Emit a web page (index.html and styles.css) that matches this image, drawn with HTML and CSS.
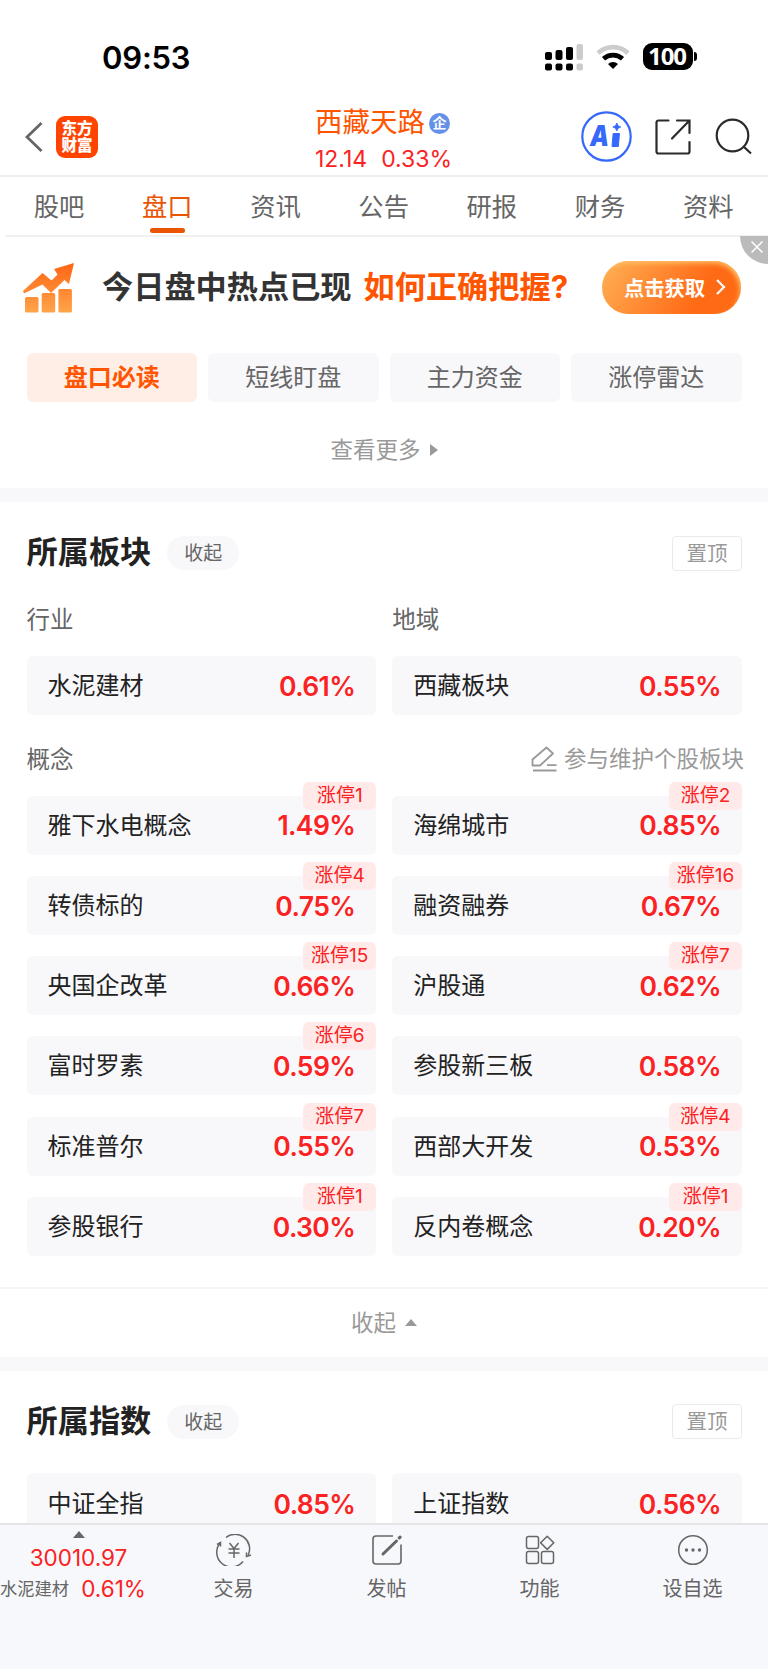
FILE: index.html
```html
<!DOCTYPE html>
<html lang="zh-CN">
<head>
  <meta charset="UTF-8" />
  <meta name="viewport" content="width=device-width, initial-scale=1.0" />
  <title>西藏天路 - 盘口</title>
  <link rel="stylesheet" href="styles.css">
</head>
<body>
  <div class="status-bar">
    <span class="time">09:53</span>
    <div class="status-icons">
      <svg class="signal" width="39" height="28" viewBox="0 0 39 28">
        <rect x="0" y="9" width="7" height="8" rx="2" />
        <rect x="10.5" y="7" width="7" height="10" rx="2" />
        <rect x="21" y="4" width="7" height="13" rx="2" />
        <rect x="31.5" y="1" width="6.5" height="16" rx="2" fill="#ccc" />
        <rect x="0" y="20.5" width="7" height="7" rx="2" />
        <rect x="10.5" y="20.5" width="7" height="7" rx="2" />
        <rect x="21" y="20.5" width="7" height="7" rx="2" />
        <rect x="31.5" y="20.5" width="6.5" height="7" rx="2" fill="#ccc" />
      </svg>
      <svg class="wifi" width="34" height="26" viewBox="0 0 34 26">
        <path d="M2 9a22 22 0 0 1 30 0" fill="none" stroke="#ccc" stroke-width="4.6" />
        <path d="M7.5 14.8a14 14 0 0 1 19 0" fill="none" stroke="#000" stroke-width="4.6" />
        <path d="M17 25l-5-5a7.4 7.4 0 0 1 10 0z" />
      </svg>
      <div class="battery">100</div>
      <span class="battery-cap"></span>
    </div>
  </div>

  <header class="header">
    <div class="header-left">
      <svg width="18" height="30" viewBox="0 0 18 30" fill="none" stroke="#666" stroke-width="2.8">
        <path d="M16.5 1L2 15l14.5 14" />
      </svg>
      <div class="app-logo">东方<br>财富</div>
    </div>
    <div class="stock">
      <div class="stock-name">西藏天路<span class="tag">企</span></div>
      <div class="stock-price"><span>12.14</span><span>0.33%</span></div>
    </div>
    <div class="header-right">
      <svg width="51" height="51" viewBox="0 0 51 51">
        <circle cx="25.5" cy="25.5" r="24.2" fill="#fff" stroke="#3668fc" stroke-width="2.2" />
        <text class="ai-text" x="9" y="35" textLength="19" lengthAdjust="spacingAndGlyphs">A</text>
        <path d="M32.2 22.5h6.3l-1.2 13h-6.3z" fill="#3668fc" stroke="#3668fc" stroke-linejoin="round" />
        <path d="M35.8 12l1.3 2.7 2.7 1.3-2.7 1.3-1.3 2.7-1.3-2.7-2.7-1.3 2.7-1.3z" fill="#3668fc" stroke="#3668fc" stroke-width=".8" />
      </svg>
      <svg class="share" width="36" height="36" viewBox="0 0 36 36" fill="none" stroke="#2b2b2b" stroke-width="2.2" stroke-linecap="round">
        <path d="M13.5 1.5h-10a2 2 0 0 0-2 2v29a2 2 0 0 0 2 2h29a2 2 0 0 0 2-2V23" />
        <path d="M22 1.5h12.5V14M34 2L17 19.5" />
      </svg>
      <svg class="search" width="37" height="37" viewBox="0 0 37 37" fill="none" stroke="#2b2b2b" stroke-width="2.2">
        <circle cx="17.5" cy="17.5" r="15.8" />
        <path d="M28.5 28.5l7.5 7" />
      </svg>
    </div>
  </header>

  <nav class="tabs">
    <a>股吧</a>
    <a class="active">盘口</a>
    <a>资讯</a>
    <a>公告</a>
    <a>研报</a>
    <a>财务</a>
    <a>资料</a>
  </nav>

  <div class="banner">
    <svg class="banner-icon" width="52" height="50" viewBox="0 0 52 50">
      <defs>
        <linearGradient id="up" x1="0" y1="0" x2="0" y2="50" gradientUnits="userSpaceOnUse">
          <stop offset="0" stop-color="#ff6414" />
          <stop offset="1" stop-color="#ffa54a" />
        </linearGradient>
      </defs>
      <g fill="url(#up)">
        <path d="M0 28L19.5 10l9 7.5 6-6L31 6 51 0l-5 21-4.500-4L28 30l-8.500-8.500L1 30.500z" />
        <rect x="2" y="34" width="13.5" height="15.5" rx="1.5" />
        <rect x="18.7" y="30" width="13.5" height="19.5" rx="1.5" />
        <rect x="35.4" y="26" width="13.5" height="23.5" rx="1.5" />
      </g>
    </svg>
    <span class="banner-text">今日盘中热点已现</span>
    <span class="banner-text hot">如何正确把握?</span>
    <button class="banner-btn">
      点击获取
      <svg width="10" height="16" viewBox="0 0 10 16" fill="none" stroke="#fff" stroke-width="2.2">
        <path d="M1 1l7 7-7 7" />
      </svg>
    </button>
    <div class="banner-close">
      <svg width="12" height="12" viewBox="0 0 12 12" stroke="#fff" stroke-width="1.5">
        <path d="M.5.5l11 11M11.5.5l-11 11" />
      </svg>
    </div>
  </div>

  <div class="chips">
    <div class="chip active">盘口必读</div>
    <div class="chip">短线盯盘</div>
    <div class="chip">主力资金</div>
    <div class="chip">涨停雷达</div>
  </div>
  <div class="more">查看更多<i class="arrow-right"></i></div>

  <section class="section">
    <div class="section-head">
      <h2>所属板块</h2>
      <span class="pill">收起</span>
      <span class="pin">置顶</span>
    </div>
    <div class="grid labels">
      <span>行业</span>
      <span>地域</span>
    </div>
    <div class="grid">
      <div class="card"><span>水泥建材</span><b>0.61%</b></div>
      <div class="card"><span>西藏板块</span><b>0.55%</b></div>
    </div>
    <div class="concept-head">
      <span>概念</span>
      <span class="edit">
        <svg width="26" height="26" viewBox="0 0 26 26" fill="none" stroke="#999" stroke-width="1.8">
          <path d="M1.5 19.5v-6L15.5 1.5l6.5 6-13 12z" stroke-linejoin="round" />
          <path d="M16 19.2h9.5M2 24.5h23.5" />
        </svg>
        参与维护个股板块
      </span>
    </div>
    <div class="grid concepts">
      <div class="card"><span>雅下水电概念</span><b>1.49%</b><em>涨停1</em></div>
      <div class="card"><span>海绵城市</span><b>0.85%</b><em>涨停2</em></div>
      <div class="card"><span>转债标的</span><b>0.75%</b><em>涨停4</em></div>
      <div class="card"><span>融资融券</span><b>0.67%</b><em>涨停16</em></div>
      <div class="card"><span>央国企改革</span><b>0.66%</b><em>涨停15</em></div>
      <div class="card"><span>沪股通</span><b>0.62%</b><em>涨停7</em></div>
      <div class="card"><span>富时罗素</span><b>0.59%</b><em>涨停6</em></div>
      <div class="card"><span>参股新三板</span><b>0.58%</b></div>
      <div class="card"><span>标准普尔</span><b>0.55%</b><em>涨停7</em></div>
      <div class="card"><span>西部大开发</span><b>0.53%</b><em>涨停4</em></div>
      <div class="card"><span>参股银行</span><b>0.30%</b><em>涨停1</em></div>
      <div class="card"><span>反内卷概念</span><b>0.20%</b><em>涨停1</em></div>
    </div>
  </section>
  <div class="collapse">收起<i class="arrow-up"></i></div>

  <section class="section index-section">
    <div class="section-head">
      <h2>所属指数</h2>
      <span class="pill">收起</span>
      <span class="pin">置顶</span>
    </div>
    <div class="grid">
      <div class="card"><span>中证全指</span><b>0.85%</b></div>
      <div class="card"><span>上证指数</span><b>0.56%</b></div>
    </div>
  </section>

  <footer class="bottom-bar">
    <div class="quote">
      <i class="arrow-up"></i>
      <div class="quote-value">30010.97</div>
      <div class="quote-row"><span>水泥建材</span><b>0.61%</b></div>
    </div>
    <div class="action">
      <svg width="36" height="32" viewBox="0 0 36 32" fill="none" stroke="#666" stroke-width="1.5">
        <path d="M10 3.500A14.500 14.500 0 0 1 32.200 21M27 27.500A14.500 14.500 0 0 1 4 9" />
        <path d="M1 10.500L4.500 8.500v4M35 21l-4.500 1.500v-4" />
        <path d="M13.500 9l4.500 5.500L22.500 9M12.500 15h11M12.500 19h11M18 14.500V24" />
      </svg>
      <span>交易</span>
    </div>
    <div class="action">
      <svg width="32" height="32" viewBox="0 0 32 32" fill="none" stroke="#666" stroke-width="1.6">
        <path d="M22 2H5a3 3 0 0 0-3 3v22a3 3 0 0 0 3 3h22a3 3 0 0 0 3-3V10.500" />
        <path d="M12 20L25.500 7" stroke-width="3" stroke-linecap="round" />
        <path d="M28.300 3.900l.8-.8" stroke-width="3.200" stroke-linecap="round" />
      </svg>
      <span>发帖</span>
    </div>
    <div class="action">
      <svg width="32" height="32" viewBox="0 0 32 32" fill="none" stroke="#666" stroke-width="1.5">
        <rect x="2.5" y="2.5" width="12" height="12" rx="2" />
        <rect x="2.5" y="17.5" width="12" height="12" rx="2" />
        <rect x="17.5" y="17.5" width="12" height="12" rx="2" />
        <path d="M23.2 2.2l6.600 6.600-6.600 6.600-6.600-6.600z" stroke-linejoin="round" />
      </svg>
      <span>功能</span>
    </div>
    <div class="action">
      <svg width="32" height="32" viewBox="0 0 32 32">
        <circle cx="16" cy="16" r="14.3" fill="none" stroke="#666" stroke-width="1.5" />
        <circle cx="9.5" cy="16" r="1.7" fill="#666" />
        <circle cx="16" cy="16" r="1.7" fill="#666" />
        <circle cx="22.5" cy="16" r="1.7" fill="#666" />
      </svg>
      <span>设自选</span>
    </div>
  </footer>
</body>
</html>
```

FILE: styles.css
```css
:root {
  --red: #fa2222;
  --orange: #ff5400;
  --gray-bg: #f8f8fb;
  --text: #222;
  --text-2: #666;
  --text-3: #999;
}

* {
  box-sizing: border-box;
}

body {
  margin: 0;
  width: 768px;
  height: 1669px;
  overflow: hidden;
  display: flex;
  flex-direction: column;
  background: #fff;
  color: var(--text);
  font-family: Inter, "Noto Sans CJK SC", sans-serif;
  line-height: 1;
}

body > * {
  flex-shrink: 0;
}

svg {
  display: block;
  flex-shrink: 0;
}

/* status bar */
.status-bar {
  height: 96px;
  padding: 18px 71px 0 102px;
  display: flex;
  align-items: center;
  justify-content: space-between;
}

.time {
  color: #000;
  font-size: 31px;
  font-weight: 600;
  letter-spacing: -0.2px;
}

.status-icons {
  display: flex;
  align-items: center;
  margin-top: -1px;
}

.wifi {
  margin: 0 13px 0 12px;
}

.battery {
  width: 50px;
  height: 27px;
  padding-right: 2px;
  border-radius: 9px;
  background: #000;
  color: #fff;
  font-family: "Open Sans", sans-serif;
  font-size: 24px;
  font-weight: 700;
  line-height: 26px;
  text-align: center;
  letter-spacing: -1px;
}

.battery-cap {
  width: 3px;
  height: 9px;
  margin-left: 1px;
  border-radius: 0 4px 4px 0;
  background: #000;
}

/* header */
.header {
  height: 81px;
  padding: 0 16px 0 25px;
  border-bottom: 2px solid #eee;
  display: grid;
  grid-template-columns: 1fr auto 1fr;
  align-items: center;
}

.header-left {
  display: flex;
  align-items: center;
  gap: 13px;
  padding-top: 2px;
}

.app-logo {
  width: 42px;
  height: 42px;
  padding-top: 4px;
  border-radius: 9px;
  background: #ff4400;
  color: #fff;
  font-size: 15.5px;
  font-weight: 900;
  line-height: 17.5px;
  text-align: center;
}

.stock {
  padding-top: 9px;
  margin-right: 10px;
}

.stock-name {
  display: flex;
  align-items: center;
  color: var(--orange);
  font-size: 27.5px;
}

.tag {
  width: 21px;
  height: 21px;
  margin-left: 4px;
  border-radius: 50%;
  background: #6590e8;
  color: #fff;
  font-size: 14px;
  font-weight: 700;
  line-height: 20px;
  text-align: center;
}

.stock-price {
  display: flex;
  gap: 14px;
  margin-top: 11px;
  color: var(--red);
  font-size: 23px;
}

.header-right {
  display: flex;
  align-items: center;
  justify-content: flex-end;
  padding-top: 2px;
}

.ai-text {
  fill: #3668fc;
  font-size: 29px;
  font-weight: 900;
  font-style: italic;
}

.share {
  margin: 0 24px 0 23px;
}

/* tabs */
.tabs {
  height: 60px;
  margin-left: 5px;
  border-bottom: 2px solid #f0f0f0;
  display: flex;
}

.tabs a {
  width: 108.2px;
  padding-top: 16px;
  display: flex;
  flex-direction: column;
  align-items: center;
  color: var(--text-2);
  font-size: 25.3px;
  line-height: 28px;
}

.tabs .active {
  color: #ea5504;
}

.tabs .active::after {
  content: "";
  width: 35px;
  height: 5px;
  margin-top: 7px;
  border-radius: 3px;
  background: #ea5504;
}

/* banner */
.banner {
  position: relative;
  height: 102px;
  padding: 0 0 1px 23px;
  display: flex;
  align-items: center;
}

.banner-text {
  margin: 1px 0 0 27px;
  color: #333;
  font-size: 31.2px;
  font-weight: 700;
}

.banner-text.hot {
  margin-left: 12px;
  color: var(--orange);
}

.banner-btn {
  width: 139px;
  height: 53px;
  margin-left: auto;
  margin-right: 27px;
  padding: 0 0 1px 7px;
  border: none;
  border-radius: 27px;
  background: linear-gradient(120deg, #ffa64d 10%, #ff6a14 70%);
  box-shadow: inset -2px 3px 5px -1px #ffc46a;
  color: #fff;
  font-family: inherit;
  font-size: 20.3px;
  font-weight: 700;
  display: flex;
  align-items: center;
  justify-content: center;
  gap: 11px;
}

.banner-close {
  position: absolute;
  top: -1px;
  right: 0;
  width: 28px;
  height: 28px;
  padding: 5px 0 0 11px;
  border-bottom-left-radius: 28px;
  background: #bbb;
}

/* chips */
.chips {
  padding: 14px 26.5px 0;
  display: grid;
  grid-template-columns: repeat(4, 1fr);
  gap: 11px;
}

.chip {
  height: 49px;
  border-radius: 6px;
  background: var(--gray-bg);
  color: var(--text-2);
  font-size: 24px;
  line-height: 50px;
  text-align: center;
}

.chip.active {
  background: #ffeee6;
  color: var(--orange);
  font-weight: 700;
}

.more,
.collapse {
  display: flex;
  align-items: center;
  justify-content: center;
  color: var(--text-3);
  font-size: 22.5px;
}

.more {
  height: 100px;
  padding-top: 10px;
  border-bottom: 14px solid var(--gray-bg);
}

.arrow-right {
  margin-left: 9px;
  border: 6px solid transparent;
  border-left: 8px solid var(--text-3);
  border-right: 0;
}

.arrow-up {
  margin-left: 9px;
  border: 6px solid transparent;
  border-bottom: 7px solid var(--text-3);
  border-top: 0;
}

/* sections */
.section {
  padding: 33px 26px 0 26.5px;
}

.section-head {
  height: 36px;
  display: flex;
  align-items: center;
}

.section-head h2 {
  margin: 0;
  font-size: 31.2px;
  font-weight: 700;
}

.pill {
  width: 72px;
  height: 34px;
  margin-left: 16px;
  border-radius: 17px;
  background: var(--gray-bg);
  color: var(--text-2);
  font-size: 19px;
  line-height: 35px;
  text-align: center;
}

.pin {
  width: 70px;
  height: 35px;
  margin-left: auto;
  border: 1.5px solid #eaeaea;
  border-radius: 4px;
  color: var(--text-3);
  font-size: 20.5px;
  line-height: 33px;
  text-align: center;
}

.grid {
  display: grid;
  grid-template-columns: 1fr 1fr;
  column-gap: 16px;
}

.labels {
  padding: 37px 0 24.5px;
  color: var(--text-2);
  font-size: 23.5px;
}

.card {
  position: relative;
  height: 59px;
  padding: 1px 21px 0 21px;
  border-radius: 6px;
  background: var(--gray-bg);
  display: flex;
  align-items: center;
  justify-content: space-between;
  font-size: 24px;
}

.card b {
  color: var(--red);
  font-size: 26.5px;
  font-weight: 600;
  letter-spacing: -0.6px;
}

.card em {
  position: absolute;
  top: -14px;
  right: 0;
  width: 73px;
  height: 28px;
  border-radius: 6px;
  background: #ffe9e9;
  color: var(--red);
  font-size: 19px;
  font-style: normal;
  line-height: 28px;
  text-align: center;
}

.concept-head {
  height: 80.5px;
  padding-top: 8px;
  margin-right: -2px;
  display: flex;
  align-items: center;
  justify-content: space-between;
  color: var(--text-2);
  font-size: 23.5px;
}

.edit {
  display: flex;
  align-items: center;
  gap: 7px;
  color: var(--text-3);
  font-size: 22.5px;
}

.concepts {
  row-gap: 21.3px;
}

.collapse {
  height: 84px;
  margin-top: 31px;
  border-top: 2px solid #f5f5f5;
  border-bottom: 14px solid var(--gray-bg);
}

.index-section {
  flex: 1 1 0;
  min-height: 0;
  overflow: hidden;
}

.index-section .section-head {
  margin-bottom: 33px;
}

.index-section .card {
  height: 62px;
}

/* bottom bar */
.bottom-bar {
  height: 146px;
  border-top: 2px solid #e3e3e8;
  background: #f7f8fb;
  display: grid;
  grid-template-columns: 157px repeat(4, 153px);
}

.quote {
  display: flex;
  flex-direction: column;
  align-items: center;
  padding-top: 6px;
  color: var(--red);
}

.quote .arrow-up {
  margin-left: 0;
  border-bottom-color: var(--text-2);
}

.quote-value {
  margin-top: 9px;
  font-size: 22.5px;
}

.quote-row {
  align-self: flex-start;
  margin-top: 8px;
  display: flex;
  align-items: center;
  gap: 12px;
}

.quote-row span {
  color: var(--text-2);
  font-size: 17.3px;
}

.quote-row b {
  font-size: 22.5px;
  font-weight: 400;
}

.action {
  display: flex;
  flex-direction: column;
  align-items: center;
  padding-top: 9px;
  gap: 13px;
  color: var(--text-2);
  font-size: 20px;
}
```
